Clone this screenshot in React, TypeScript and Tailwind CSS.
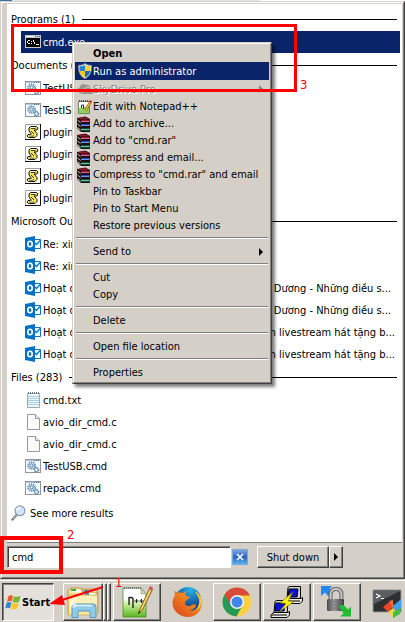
import type { ReactNode } from 'react';

const raised =
  'border border-t-white border-l-white border-r-[#404040] border-b-[#404040] shadow-[inset_-1px_-1px_0_#808080]';

/* ---------- small file icons ---------- */

function ConsoleIcon() {
  return (
    <svg width="16" height="16" viewBox="0 0 16 16" shapeRendering="crispEdges">
      <rect x="0" y="1" width="16" height="13" fill="#c8c8c8" />
      <rect x="1" y="2" width="9" height="1" fill="#eee" />
      <path d="M10 2h1v1h-1zM12 2h1v1h-1zM14 2h1v1h-1z" fill="#555" />
      <rect x="1" y="4" width="14" height="9" fill="#000" />
      <path d="M2 7h1v-1h2v1h-2v2h2v1h-2v-1h-1zM6 7h1v1h-1zM6 9h1v1h-1zM8 6h1v2h1v2h-1v-2h-1zM11 10h3v1h-3z" fill="#fff" />
    </svg>
  );
}

function BatchIcon() {
  return (
    <svg width="16" height="16" viewBox="0 0 16 16">
      <rect x="0.5" y="1.5" width="15" height="13" fill="#fafbfc" stroke="#8d98a3" />
      <path d="M1 2.5h14" stroke="#b9c8d6" />
      <path d="M9 2.5h6" stroke="#47739a" strokeDasharray="1 1" />
      <circle cx="6.5" cy="7.5" r="3.5" fill="#dcecf8" stroke="#5d8db5" strokeWidth="1.6" strokeDasharray="1.4 0.8" />
      <circle cx="6.5" cy="7.5" r="1.6" fill="#fff" stroke="#41729d" />
      <circle cx="11.5" cy="11.8" r="2" fill="#e3f0fa" stroke="#41729d" strokeWidth="1.4" strokeDasharray="1.2 0.6" />
      <path d="M10 8.5l2 1" stroke="#6c9bc2" />
    </svg>
  );
}

function ScriptIcon() {
  return (
    <svg width="16" height="16" viewBox="0 0 16 16">
      <path d="M0 0h16v16H0z" fill="#fff" />
      <path d="M0.5 15V0.5H15" fill="none" stroke="#a0a0a0" />
      <path d="M0 15.5h15.5V0" fill="none" stroke="#111" />
      <path d="M5.500 2.500h6l1.500 1.500-1 2H9l3 3.500v2l-2 2H3.500l-1.500-1.500 1-1.500h3.500L4 7V4z" fill="#f5e650" stroke="#111" />
      <path d="M6 4.500h4.500M6 7l3 3M4.500 12h4.500" stroke="#111" strokeWidth="0.8" />
      <path d="M6 3.500h4M5 11h3" stroke="#fff" strokeWidth="0.8" />
    </svg>
  );
}

function OutlookIcon() {
  return (
    <svg width="16" height="16" viewBox="0 0 16 16">
      <path d="M8 3.500h7.500v9H8z" fill="#fff" stroke="#0072c6" />
      <path d="M9.500 6.500l2 2L15 4.500" fill="none" stroke="#0072c6" strokeWidth="1.200" />
      <path d="M0 2l10-2v16L0 14z" fill="#0072c6" />
      <ellipse cx="5" cy="8" rx="2.200" ry="2.800" fill="none" stroke="#fff" strokeWidth="1.600" />
    </svg>
  );
}

function TextFileIcon() {
  return (
    <svg width="16" height="16" viewBox="0 0 16 16">
      <path d="M2.500 1.500h12v14h-12z" fill="#eff7fb" stroke="#9aa9b3" />
      <path d="M3 4.500h11M3 6.500h11M3 8.500h11M3 10.500h11M3 12.500h11" stroke="#a6cfe2" />
      <path d="M3 1h11" stroke="#6d7a83" strokeDasharray="1 1" strokeWidth="2" />
    </svg>
  );
}

function BlankFileIcon() {
  return (
    <svg width="16" height="16" viewBox="0 0 16 16">
      <path d="M2.500 0.500h8l4 4v11h-12z" fill="#fbfbfb" stroke="#999" />
      <path d="M10.500 0.500v4h4" fill="#e8e8e8" stroke="#999" />
    </svg>
  );
}

function SearchIcon() {
  return (
    <svg width="16" height="16" viewBox="0 0 16 16">
      <path d="M6 9.500L1.500 14.500" stroke="#77797c" strokeWidth="2.400" strokeLinecap="round" />
      <path d="M6 9.500L1.800 14" stroke="#d0d0d0" strokeWidth="0.800" />
      <circle cx="9" cy="5.800" r="4.900" fill="#cfe7f8" stroke="#8d9aa5" strokeWidth="1.200" />
      <path d="M6 5.500a3 3 0 013-3" fill="none" stroke="#fff" strokeWidth="1.600" />
    </svg>
  );
}

/* ---------- context menu icons ---------- */

function ShieldIcon() {
  return (
    <svg width="16" height="16" viewBox="0 0 16 16">
      <path d="M8 .4C6 1.800 3.800 2.300 1.500 2.300 1.200 8 2.500 13 8 15.700c5.500-2.700 6.800-7.700 6.500-13.400C12.200 2.300 10 1.800 8 .4z" fill="#e8edf2" stroke="#7b8794" strokeWidth="0.800" />
      <path d="M8 2v6H2.600c-.2-1.500-.2-3-.1-4.500C4.500 3.400 6.400 3 8 2z" fill="#2f7fd6" />
      <path d="M8 2v6h5.400c.2-1.500.2-3 .1-4.500C11.500 3.400 9.600 3 8 2z" fill="#fbd432" />
      <path d="M8 8v6.400C5 12.900 3.200 10.700 2.600 8z" fill="#fbc91f" />
      <path d="M8 8v6.400c3-1.500 4.800-3.700 5.400-6.400z" fill="#2468bd" />
    </svg>
  );
}

function CloudIcon() {
  return (
    <svg width="16" height="16" viewBox="0 0 16 16">
      <path d="M3 12a3 3 0 01-.5-5.500A4 4 0 019 4a4 4 0 015 4 2.500 2.500 0 010 5H6a3 3 0 01-3-1z" fill="#9a9791" />
      <path d="M5 12a3 3 0 013-4 3.500 3.500 0 016-.5" fill="none" stroke="#d4d0c8" />
    </svg>
  );
}

function NotepadIcon() {
  return (
    <svg width="16" height="16" viewBox="0 0 16 16">
      <path d="M1.500 2.500h11v12h-11z" fill="#fff" stroke="#6d8a5b" />
      <path d="M2 9l10-2v7H2z" fill="#8fd460" />
      <path d="M2 2h10" stroke="#555" strokeDasharray="1 1" strokeWidth="2" />
      <path d="M4.500 9v-3h2v4" stroke="#333" fill="none" />
      <path d="M13.500 2.500l-5 9.500" stroke="#7b4a14" strokeWidth="2.600" />
      <path d="M13.500 2.500l-5 9.500" stroke="#f2bd2c" strokeWidth="1.600" />
      <path d="M14 1.500l-1 2" stroke="#cf3340" strokeWidth="2.600" />
    </svg>
  );
}

function ArchiveIcon() {
  return (
    <svg width="14" height="16" viewBox="0 0 14 16">
      <path d="M0 2l8.500-1.500L13 3v13H4l-4-4z" fill="#1c0e12" />
      <path d="M.5 2.300l7.500-1.400L12.500 3.500H4z" fill="#8b1728" />
      <path d="M4 4h9v2H4z" fill="#8f1a34" />
      <path d="M4 5.500h8" stroke="#e77fb0" strokeWidth="0.800" />
      <path d="M4 8h9v2H4z" fill="#2746b8" />
      <path d="M4 9.500h8" stroke="#7fb0f0" strokeWidth="0.800" />
      <path d="M4 12.500h9v2H4z" fill="#14866b" />
      <path d="M4 13.500h8" stroke="#6fd8a8" strokeWidth="0.800" />
      <path d="M.5 4l3 2.500M.5 8l3 2.500M.5 11.500l3 2.500" stroke="#e6e2d2" strokeWidth="0.900" />
    </svg>
  );
}

/* ---------- results list ---------- */

type Result = { icon: ReactNode; text: string; tail?: string; short?: boolean };

function GroupTitle({ children }: { children: string }) {
  return (
    <h2 className="flex h-6 items-center gap-[7px] pl-1 pr-[5px] font-normal whitespace-nowrap">
      {children}
      <span className="h-px flex-1 bg-black" />
    </h2>
  );
}

function ResultRow({ item, selected = false }: { item: Result; selected?: boolean }) {
  return (
    <li
      className={`ml-3.5 mr-0.5 flex h-[22px] items-center gap-0.5 pl-1 whitespace-nowrap ${
        selected ? 'bg-[#0a246a] text-white' : ''
      }`}
    >
      <span className="mb-px w-4 shrink-0">{item.icon}</span>
      <span className="min-w-0 flex-1 overflow-hidden">{item.text}</span>
      {item.tail && <span className={`shrink-0 ${item.short ? 'pr-[9px]' : 'pr-[5px]'}`}>{item.tail}</span>}
    </li>
  );
}

const documents: Result[] = [
  { icon: <BatchIcon />, text: 'TestUSB' },
  { icon: <BatchIcon />, text: 'TestISO' },
  { icon: <ScriptIcon />, text: 'plugin' },
  { icon: <ScriptIcon />, text: 'plugin' },
  { icon: <ScriptIcon />, text: 'plugin' },
  { icon: <ScriptIcon />, text: 'plugin' },
];

const mails: Result[] = [
  { icon: <OutlookIcon />, text: 'Re: xin' },
  { icon: <OutlookIcon />, text: 'Re: xin' },
  { icon: <OutlookIcon />, text: 'Hoạt đ', tail: 'Dương - Những điều s...', short: true },
  { icon: <OutlookIcon />, text: 'Hoạt đ', tail: 'Dương - Những điều s...', short: true },
  { icon: <OutlookIcon />, text: 'Hoạt đ', tail: 'm livestream hát tặng b...' },
  { icon: <OutlookIcon />, text: 'Hoạt đ', tail: 'm livestream hát tặng b...' },
];

const files: Result[] = [
  { icon: <TextFileIcon />, text: 'cmd.txt' },
  { icon: <BlankFileIcon />, text: 'avio_dir_cmd.c' },
  { icon: <BlankFileIcon />, text: 'avio_dir_cmd.c' },
  { icon: <BatchIcon />, text: 'TestUSB.cmd' },
  { icon: <BatchIcon />, text: 'repack.cmd' },
];

/* ---------- context menu ---------- */

function MenuItem({
  children,
  icon,
  look = 'h-[17px]',
  arrow,
}: {
  children: string;
  icon?: ReactNode;
  look?: string;
  arrow?: string;
}) {
  return (
    <button role="menuitem" className={`flex w-full items-center pl-0.5 text-left whitespace-nowrap ${look}`}>
      <span className="w-4 shrink-0">{icon}</span>
      <span className="flex-1">{children}</span>
      {arrow && (
        <svg width="4" height="8" viewBox="0 0 4 8" className="mr-1.5">
          <path d="M0 0l4 4-4 4z" fill={arrow} />
        </svg>
      )}
    </button>
  );
}

function Separator() {
  return <hr className="mx-px mt-[3px] mb-1 h-[2px] border-t border-b border-t-[#808080] border-b-white" />;
}

function ContextMenu() {
  return (
    <div
      role="menu"
      className="absolute top-[42px] left-[72px] w-[200px] border border-t-[#d4d0c8] border-r-[#404040] border-b-[#404040] border-l-[#d4d0c8] bg-[#d4d0c8] shadow-[3px_3px_3px_rgba(0,0,0,0.5)]"
    >
      <div className="border border-t-white border-r-[#808080] border-b-[#808080] border-l-white p-px">
        <MenuItem look="h-[17px] font-bold">Open</MenuItem>
        <MenuItem look="h-[18px] bg-[#0a246a] text-white" icon={<ShieldIcon />}>Run as administrator</MenuItem>
        <MenuItem
          look="h-[18px] text-[#808080] [text-shadow:1px_1px_0_white]"
          icon={<CloudIcon />}
          arrow="#808080"
        >
          SkyDrive Pro
        </MenuItem>
        <MenuItem icon={<NotepadIcon />}>Edit with Notepad++</MenuItem>
        <MenuItem icon={<ArchiveIcon />}>Add to archive...</MenuItem>
        <MenuItem icon={<ArchiveIcon />}>Add to "cmd.rar"</MenuItem>
        <MenuItem icon={<ArchiveIcon />}>Compress and email...</MenuItem>
        <MenuItem icon={<ArchiveIcon />}>Compress to "cmd.rar" and email</MenuItem>
        <MenuItem>Pin to Taskbar</MenuItem>
        <MenuItem>Pin to Start Menu</MenuItem>
        <MenuItem>Restore previous versions</MenuItem>
        <Separator />
        <MenuItem arrow="#000">Send to</MenuItem>
        <Separator />
        <MenuItem>Cut</MenuItem>
        <MenuItem>Copy</MenuItem>
        <Separator />
        <MenuItem>Delete</MenuItem>
        <Separator />
        <MenuItem>Open file location</MenuItem>
        <Separator />
        <MenuItem>Properties</MenuItem>
      </div>
    </div>
  );
}

/* ---------- taskbar icons ---------- */

function WindowsFlag() {
  return (
    <svg width="16" height="16" viewBox="0 0 16 16" className="shrink-0">
      <path d="M3.500 2C5 1 6.500 1 8 1.800L6.700 7.500C5 6.800 3.500 6.900 2 7.700z" fill="#ea5a24" />
      <path d="M9 2.200c1.800.9 4 .9 6.500-.1L14 7.900c-2 .9-4.500.9-6.500.1z" fill="#7ab92d" />
      <path d="M1.700 8.700c1.500-.8 3-.8 4.700-.1L5 14.300C3.300 13.500 1.700 13.600.2 14.500z" fill="#2f83d8" />
      <path d="M7.200 9c2 .8 4.300.8 6.500 0l-1.500 5.600c-2 .9-4.500.8-6.400.1z" fill="#fcc521" />
    </svg>
  );
}

function ExplorerIcon() {
  return (
    <svg width="34" height="34" viewBox="0 0 34 34">
      <path d="M16 4h14l2 2v22H16z" fill="#f0cd71" stroke="#b48b34" strokeWidth="0.800" />
      <rect x="19" y="6" width="11" height="5" fill="#fff" />
      <rect x="18" y="5" width="5" height="2.500" fill="#248fd8" />
      <path d="M2 5l2-2h11l2 4h14v22H2z" fill="#f8dc8d" stroke="#b48b34" strokeWidth="0.800" />
      <rect x="5" y="4.500" width="10" height="3" fill="#fff" />
      <rect x="5" y="4" width="5" height="2" fill="#2eae3f" />
      <rect x="20" y="8" width="9" height="2.500" fill="#fff" />
      <rect x="19" y="8" width="4" height="2" fill="#248fd8" />
      <path d="M2.500 10h29v20h-29z" fill="#fbe6a2" stroke="#d6af56" strokeWidth="0.800" />
      <path d="M3 11h28v6L3 24z" fill="#fff3c8" opacity="0.700" />
      <path d="M6 32.500V22q0-3 3-3h18q3 0 3 3v10.500h-6V26H12v6.500z" fill="#8fcbe9" stroke="#4f98bf" />
      <path d="M8 22.500q0-2 2-2h16" fill="none" stroke="#e1f5ff" strokeWidth="1.500" />
      <path d="M7 15v8M3 19h8M4.500 16.500l5 5M9.500 16.500l-5 5" stroke="#fff" strokeWidth="0.800" />
    </svg>
  );
}

function NotepadPlusIcon() {
  return (
    <svg width="34" height="34" viewBox="0 0 34 34">
      <defs>
        <linearGradient id="npp" x1="0" y1="0" x2="0" y2="1">
          <stop offset="0.350" stopColor="#fff" />
          <stop offset="0.600" stopColor="#bfe98d" />
          <stop offset="1" stopColor="#57b51c" />
        </linearGradient>
      </defs>
      <path d="M3 3h18l5 6v23H3z" fill="url(#npp)" stroke="#4b8a2a" strokeWidth="0.800" />
      <path d="M4 3h18" stroke="#777" strokeWidth="2" strokeDasharray="1 1" />
      <path d="M21 3v6h5z" fill="#c8d8b6" stroke="#829670" strokeWidth="0.600" />
      <path d="M9 20v-8M9 12.500h2q2 0 2 2V23" fill="none" stroke="#222" strokeWidth="1.400" />
      <path d="M14.500 16h4M16.500 14v4M19.500 16h4M21.500 14v4" stroke="#222" />
      <path d="M30 2.500L20 24l-2 5 4.500-4L32.500 4.500z" fill="#f1bd3c" stroke="#744e16" strokeWidth="0.800" />
      <path d="M31 4l-9.500 20" stroke="#fbe091" />
      <path d="M30 1l3 1.500-1.500 3-3-1.300z" fill="#d85361" />
      <path d="M19 26l-1 3 2.500-2z" fill="#332613" />
    </svg>
  );
}

function FirefoxIcon() {
  return (
    <svg width="32" height="32" viewBox="0 0 32 32">
      <defs>
        <radialGradient id="ffg" cx="0.600" cy="0.100" r="0.900">
          <stop offset="0" stopColor="#25b5ea" />
          <stop offset="0.700" stopColor="#164d96" />
        </radialGradient>
        <linearGradient id="fff" x1="1" y1="0" x2="0" y2="1">
          <stop offset="0" stopColor="#ffdf3d" />
          <stop offset="0.350" stopColor="#f38b20" />
          <stop offset="1" stopColor="#d93d19" />
        </linearGradient>
      </defs>
      <circle cx="17" cy="14" r="13" fill="url(#ffg)" />
      <path d="M4 5c1 0 2 1 3 2 2-1 4 0 5 0 1-1 3-2 4-2-2 2-2 4-1 5l4 1c-1 2-3 2-4 4-2 2-1 5 3 5 3 0 5-3 7-1 0 3-4 5-7 5 6 2 11-3 10-10-.500-4-3-6-4-9 4 2 7 7 7 12 0 8-6 14-14 14S1.500 25 1.500 17c0-4 1.500-6 2.500-8-.500-1-.500-3 0-4z" fill="url(#fff)" />
      <path d="M29 9c1 5-.500 12-4 15 5-1 6-9 4-15z" fill="#ffd93c" />
    </svg>
  );
}

function ChromeIcon() {
  return (
    <svg width="32" height="32" viewBox="0 0 32 32">
      <circle cx="16" cy="16" r="14.500" fill="#fdcf45" />
      <path d="M3.440 8.750A14.500 14.500 0 0128.560 8.750L29 9.500H16L9.700 19.500z" fill="#d94a3d" />
      <path d="M3.440 8.750A14.500 14.500 0 0015.400 30.500l6.200-11-9.600 2z" fill="#239a58" />
      <circle cx="16" cy="16" r="7" fill="#f6f6f6" />
      <circle cx="16" cy="16" r="5.500" fill="#4285e8" />
    </svg>
  );
}

function PuttyIcon() {
  return (
    <svg width="34" height="34" viewBox="0 0 34 34">
      {[
        [14, 1],
        [1, 15],
      ].map(([x, y]) => (
        <g key={x} transform={`translate(${x} ${y})`} stroke="#000">
          <path d="M4 1.500L5.500.500h11v11l-2 1.500H3z" fill="#d6d3cc" />
          <path d="M5 3h9l-1 8H4z" fill="#0a10d8" />
          <path d="M1 14l2-1.500h14l1.500-1v3.500l-2.500 2.500H0V15z" fill="#eceae5" />
          <path d="M1 15h15" />
        </g>
      ))}
      <path d="M23 7L10 18l6 .5L9 27l15-10.500-6-.5z" fill="#fff200" stroke="#6e6800" strokeWidth="0.600" />
    </svg>
  );
}

function LockIcon() {
  return (
    <svg width="34" height="34" viewBox="0 0 34 34">
      <defs>
        <linearGradient id="lock" x1="0" x2="1" y1="0" y2="0">
          <stop offset="0" stopColor="#444" />
          <stop offset="0.400" stopColor="#9a9a9a" />
          <stop offset="1" stopColor="#333" />
        </linearGradient>
      </defs>
      <path d="M1 1h11L9.500 4l3 4.500L9 12 5 7.500 1 11z" fill="#2288ea" />
      <path d="M10.500 16v-6q0-6 5.500-6t5.500 6v6" fill="none" stroke="#666" strokeWidth="4" />
      <path d="M10.500 16v-6q0-6 5.500-6t5.500 6v6" fill="none" stroke="#ccc" strokeWidth="1.800" />
      <rect x="7" y="14" width="17" height="12" rx="1.500" fill="url(#lock)" />
      <path d="M8 17h15M8 20h15M8 23h15" stroke="#777" strokeWidth="0.800" />
      <path d="M19 21.500l4-2 5 5 3-3v10H20l3.500-3z" fill="#20bd30" />
    </svg>
  );
}

function TerminalIcon() {
  return (
    <svg width="32" height="32" viewBox="0 0 32 32">
      <path d="M2 4h28v22H2z" fill="#2d2f31" stroke="#999" />
      <path d="M3 5h26L3 18z" fill="#5b5e60" />
      <path d="M5 8l4 2-4 2M10 12.500h3" fill="none" stroke="#fff" strokeWidth="1.200" />
      <path d="M12 21l6-5 5 4-6 6z" fill="#e9482b" />
      <path d="M18 15l4-1v5l4-1-3 6z" fill="#f1743d" />
      <path d="M22 20l8-7v9l-5 4z" fill="#3d9ff0" />
      <path d="M17 26l5-4 4 4-4 5z" fill="#f4d44a" />
      <path d="M22 26l8-4-1 6-7 4z" fill="#45bd3e" />
    </svg>
  );
}

function TaskButton({ label, children, flat = false }: { label: string; children: ReactNode; flat?: boolean }) {
  return (
    <button aria-label={label} className={`flex h-[38px] w-12 shrink-0 items-center justify-center ${flat ? '' : raised}`}>
      {children}
    </button>
  );
}

function Annotations() {
  return (
    <div className="pointer-events-none text-[13px] leading-4 text-[#f00]">
      <div className="absolute top-6 left-[11px] h-[68px] w-[286px] border-3 border-[#f00]" />
      <span className="absolute top-[77px] left-[300px]">3</span>
      <div className="absolute top-[536px] left-0 h-[38px] w-[63px] border-4 border-[#f00]" />
      <span className="absolute top-[527px] left-[67px]">2</span>
      <svg className="absolute top-[580px] left-[48px]" width="56" height="28" viewBox="0 0 56 28">
        <path d="M55 7L14 20" stroke="#f00" strokeWidth="2" />
        <path d="M1 24L14 15l3 10z" fill="#f00" />
      </svg>
      <span className="absolute top-[575px] left-[115px]">1</span>
    </div>
  );
}

export default function App() {
  return (
    <main className="relative w-full overflow-hidden bg-[#d4d0c8] font-['Tahoma','DejaVu_Sans_Condensed','DejaVu_Sans',sans-serif] text-[11px] leading-[13px] text-black">
      <div className="flex h-px">
        <span className="w-3 bg-[#3a6ea5]" />
        <span className="w-[248px] bg-[#e4e4e4]" />
        <span className="flex-1 bg-white" />
      </div>

      <section className="border border-t-[#d4d0c8] border-r-[#404040] border-b-[#404040] border-l-[#d4d0c8]">
        <div className="border border-t-white border-r-[#808080] border-b-[#808080] border-l-white pt-px">
          <div className="mr-px ml-[5px] border-b border-[#808080] bg-white pt-[3px] pb-[18px]">
            <GroupTitle>Programs (1)</GroupTitle>
            <ul>
              <ResultRow selected item={{ icon: <ConsoleIcon />, text: 'cmd.exe' }} />
            </ul>
            <GroupTitle>Documents (32)</GroupTitle>
            <ul>
              {documents.map((item, i) => (
                <ResultRow key={i} item={item} />
              ))}
            </ul>
            <GroupTitle>Microsoft Outlook</GroupTitle>
            <ul>
              {mails.map((item, i) => (
                <ResultRow key={i} item={item} />
              ))}
            </ul>
            <GroupTitle>Files (283)</GroupTitle>
            <ul>
              {files.map((item, i) => (
                <ResultRow key={i} item={item} />
              ))}
            </ul>
            <a href="#results" className="mt-[3px] ml-1 flex h-[22px] items-center gap-[3px]">
              <SearchIcon />
              See more results
            </a>
          </div>

          <form className="flex h-[34px] items-start pt-[3px] pl-[5px]">
            <input
              aria-label="Search programs and files"
              defaultValue="cmd"
              className="h-[22px] w-56 border border-t-[#808080] border-r-white border-b-white border-l-[#808080] bg-white pl-1 shadow-[inset_1px_1px_0_#404040] outline-none"
            />
            <button
              type="button"
              aria-label="Clear search"
              className="mt-[3px] ml-px flex size-4 items-center justify-center border border-[#7fa6dc] bg-linear-to-b from-[#7ea6e4] via-[#2b5fc0] to-[#58b6ee]"
            >
              <svg width="8" height="8" viewBox="0 0 8 8">
                <path d="M1 1l6 6M7 1L1 7" stroke="#fff" strokeWidth="1.600" />
              </svg>
            </button>
            <button type="button" className={`ml-[9px] h-[22px] w-[72px] ${raised}`}>
              Shut down
            </button>
            <button type="button" aria-label="More power options" className={`flex h-[22px] w-3.5 items-center justify-center ${raised}`}>
              <svg width="4" height="8" viewBox="0 0 4 8">
                <path d="M0 0l4 4-4 4z" />
              </svg>
            </button>
          </form>
        </div>
      </section>

      <nav className="mt-px flex items-start border-t border-white pt-0.5 pb-px pl-0.5">
        <button className="mr-[9px] flex h-[38px] w-[52px] shrink-0 items-center gap-px border border-t-[#404040] border-r-white border-b-white border-l-[#404040] bg-[#e4e1dc] pl-0.5 font-bold shadow-[inset_1px_1px_0_#808080]">
          <WindowsFlag />
          Start
        </button>
        <div className="flex shrink-0 gap-0.5">
          <div className="flex">
            <button aria-label="Windows Explorer" className={`flex h-[38px] w-10 items-center justify-center ${raised}`}>
              <ExplorerIcon />
            </button>
            <span className={`h-[38px] w-1 ${raised}`} />
            <span className={`h-[38px] w-1 ${raised}`} />
          </div>
          <TaskButton label="Notepad++"><NotepadPlusIcon /></TaskButton>
          <TaskButton label="Firefox" flat><FirefoxIcon /></TaskButton>
          <TaskButton label="Chrome"><ChromeIcon /></TaskButton>
          <TaskButton label="PuTTY"><PuttyIcon /></TaskButton>
          <TaskButton label="WinSCP"><LockIcon /></TaskButton>
          <TaskButton label="Terminal" flat><TerminalIcon /></TaskButton>
        </div>
      </nav>

      <ContextMenu />
      <Annotations />
    </main>
  );
}
